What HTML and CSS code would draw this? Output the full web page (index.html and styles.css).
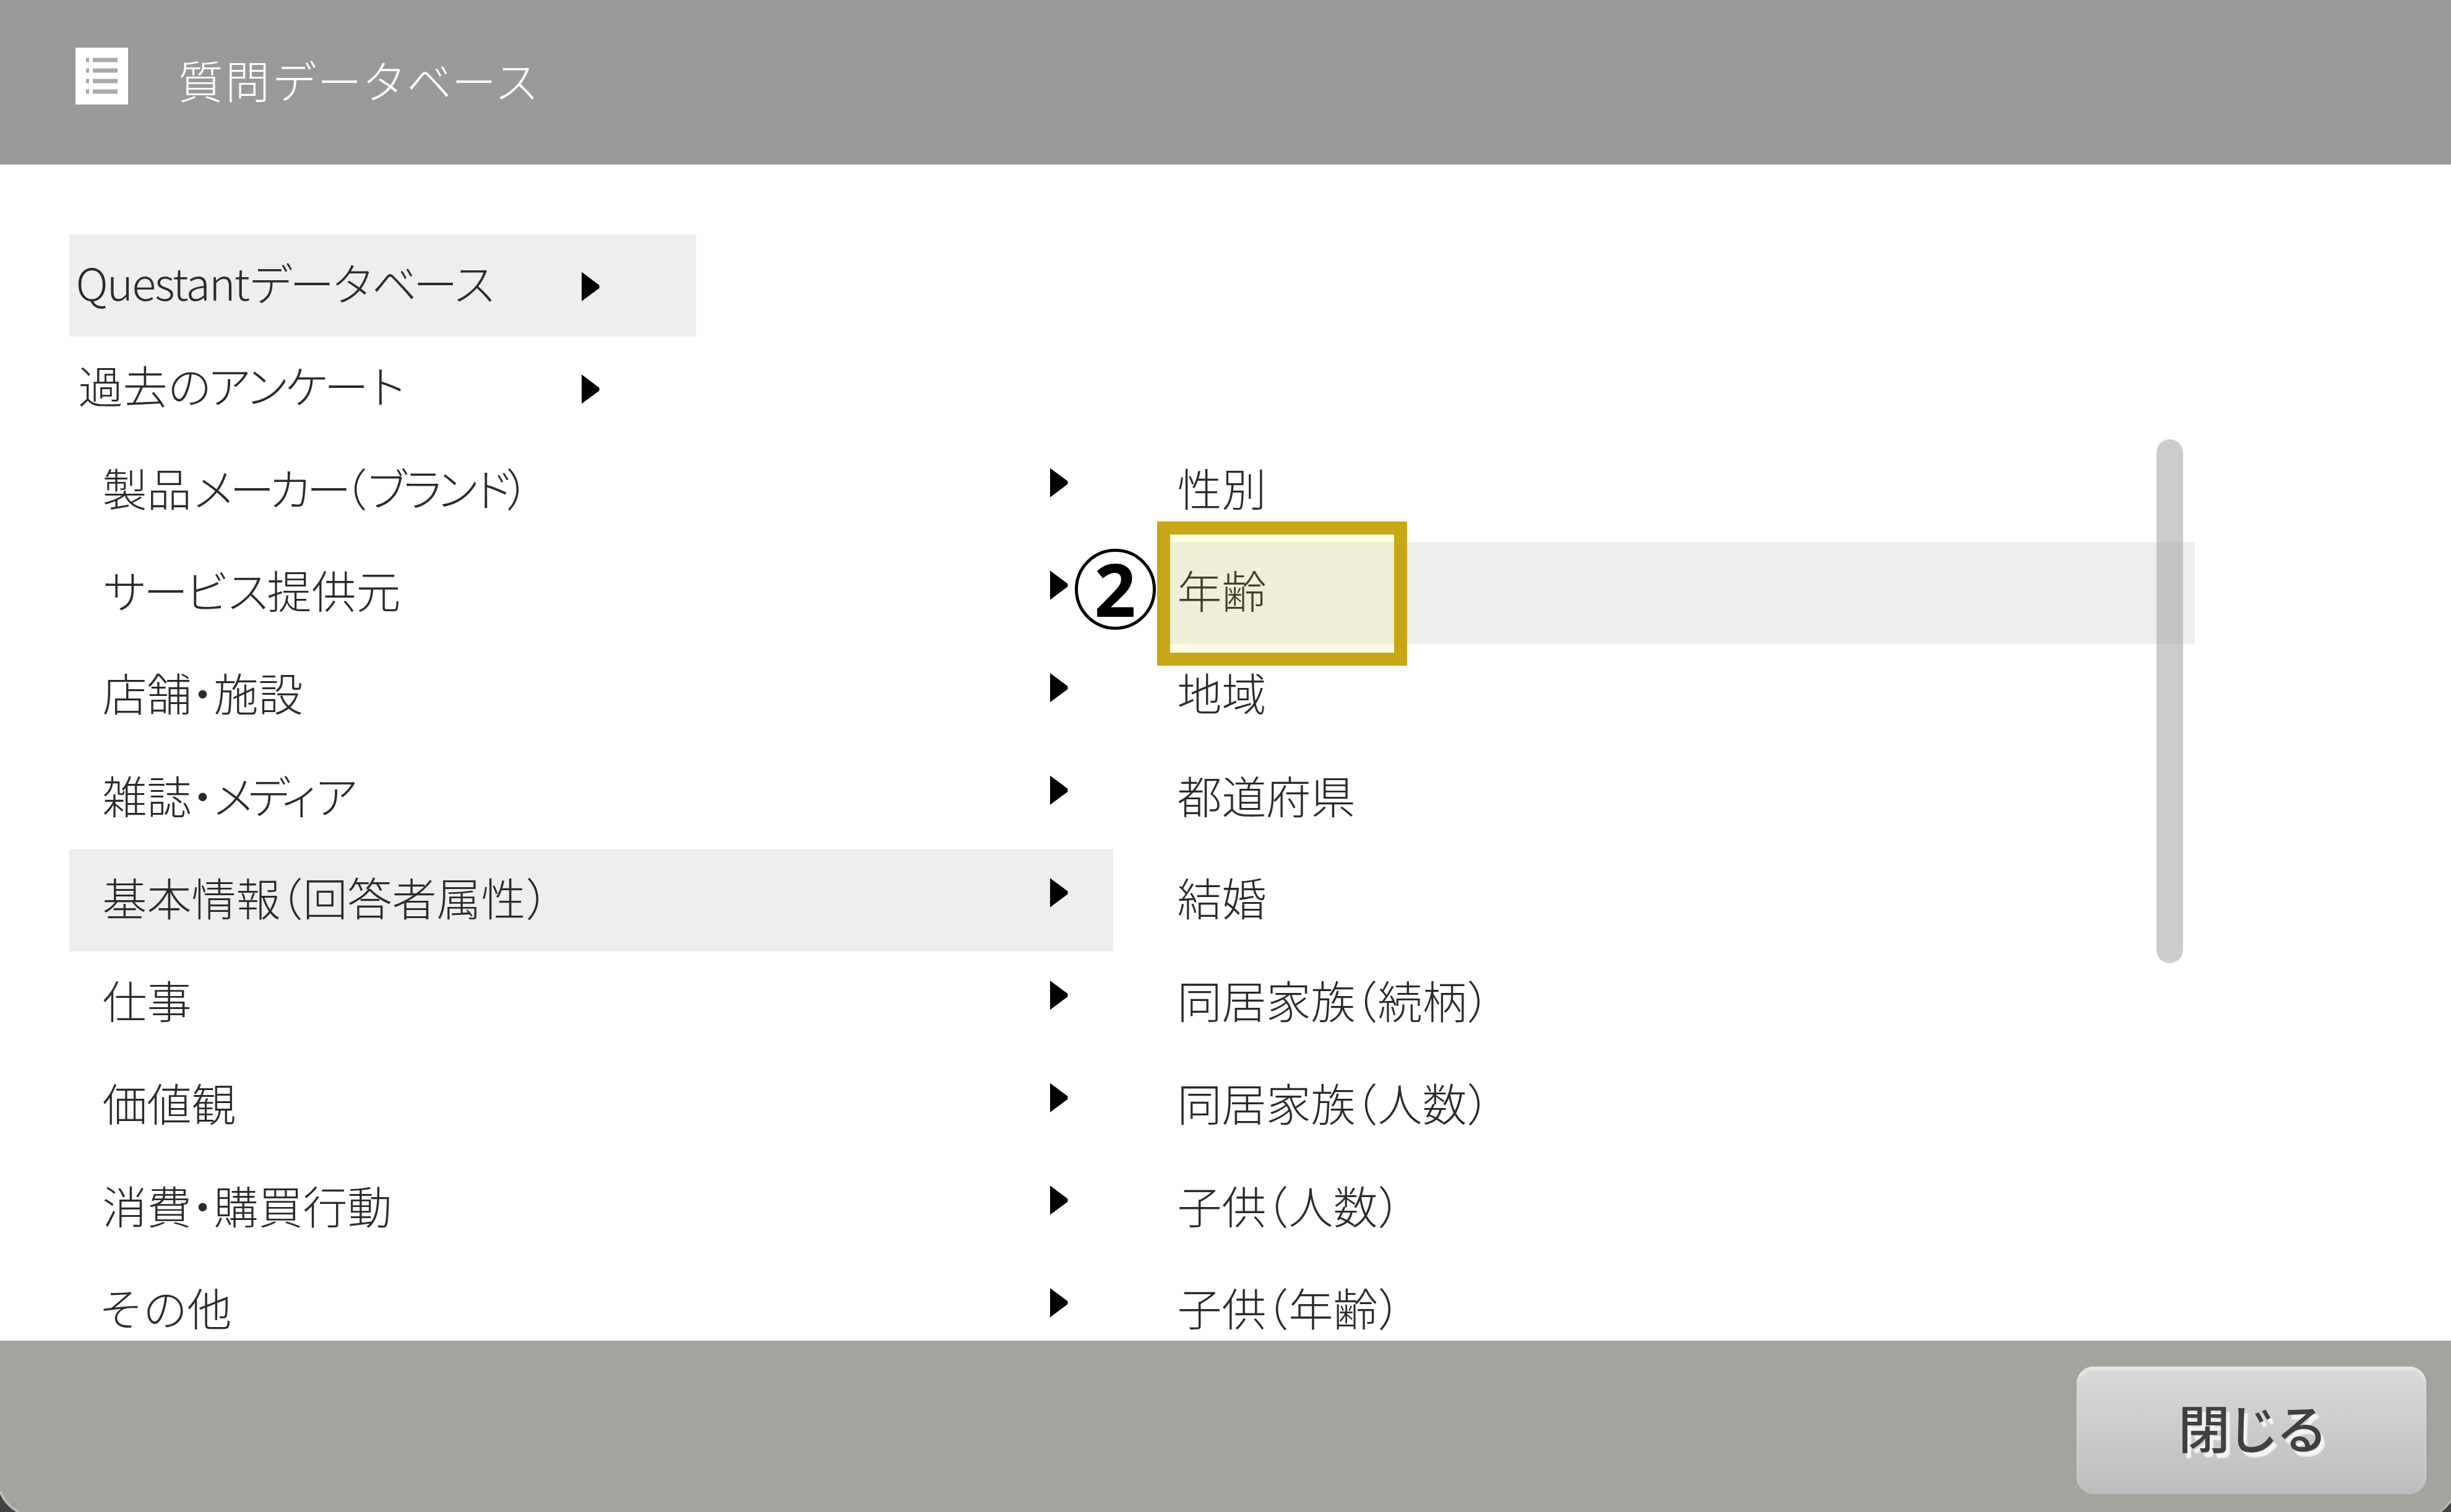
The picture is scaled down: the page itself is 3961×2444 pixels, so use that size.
FILE: index.html
```
<!DOCTYPE html>
<html lang="ja">
<head>
    <meta charset="UTF-8">
    <title>質問データベース</title>
    <link rel="stylesheet" href="styles.css">
</head>
<body>
    <div class="dialog">
        <header class="dialog-header">
            <svg class="header-icon" viewBox="0 0 85 92">
                <rect width="85" height="92" fill="#fff"/>
                <path d="M17 20h5M17 37h5M17 54h5M17 71h5M28 20h40M28 37h40M28 54h40M28 71h40" stroke="#a9a9a9" stroke-width="7"/>
            </svg>
            <h1 class="title">質問<span class="title-kana">データベース</span></h1>
        </header>
        <main class="dialog-body">
            <ul class="sources">
                <li class="row selected"><span class="label"><span class="latin">Questant</span><span class="kana loose">データベース</span></span><i class="arrow"></i></li>
                <li class="row"><span class="label past">過去<span class="kana">のアンケート</span></span><i class="arrow"></i></li>
            </ul>
            <div class="columns">
                <ul class="categories">
                    <li class="row"><span class="label">製品<span class="kana tight">メーカー</span>（<span class="kana narrow">ブランド</span>）</span><i class="arrow"></i></li>
                    <li class="row"><span class="label"><span class="kana loose">サービス</span>提供元</span><i class="arrow"></i></li>
                    <li class="row"><span class="label">店舗・施設</span><i class="arrow"></i></li>
                    <li class="row"><span class="label">雑誌・<span class="kana narrow">メディア</span></span><i class="arrow"></i></li>
                    <li class="row selected"><span class="label">基本情報（回答者属性）</span><i class="arrow"></i></li>
                    <li class="row"><span class="label">仕事</span><i class="arrow"></i></li>
                    <li class="row"><span class="label">価値観</span><i class="arrow"></i></li>
                    <li class="row"><span class="label">消費・購買行動</span><i class="arrow"></i></li>
                    <li class="row"><span class="label other">その他</span><i class="arrow"></i></li>
                </ul>
                <ul class="questions">
                    <li class="row"><span class="label">性別</span></li>
                    <li class="row selected"><span class="label">年齢</span>
                        <div class="step"><span class="step-number">2</span></div>
                        <div class="marker"></div>
                    </li>
                    <li class="row"><span class="label">地域</span></li>
                    <li class="row"><span class="label">都道府県</span></li>
                    <li class="row"><span class="label">結婚</span></li>
                    <li class="row"><span class="label">同居家族（続柄）</span></li>
                    <li class="row"><span class="label">同居家族（人数）</span></li>
                    <li class="row"><span class="label">子供（人数）</span></li>
                    <li class="row"><span class="label">子供（年齢）</span></li>
                </ul>
                <div class="scrollbar"></div>
            </div>
        </main>
        <footer class="dialog-footer">
            <button class="close">閉じる</button>
            <svg class="corner left" viewBox="0 0 32 34">
                <path d="M0 0Q8 22 30 34H0z" fill="#444"/>
                <path d="M0 0Q8 22 30 34" fill="none" stroke="#bbb" stroke-width="4"/>
            </svg>
            <svg class="corner right" viewBox="0 0 20 20">
                <path d="M20 2Q12 13 2 20H20z" fill="#444"/>
                <path d="M20 2Q12 13 2 20" fill="none" stroke="#bbb" stroke-width="3"/>
            </svg>
        </footer>
    </div>
</body>
</html>
```
FILE: styles.css
```
* {
    box-sizing: border-box;
}
body {
    margin: 0;
    font-family: "Noto Sans CJK JP", sans-serif;
    font-size: 72px;
    font-weight: 300;
    color: #2b2b2b;
    background: #fff;
}
ul {
    list-style: none;
    margin: 0;
    padding: 0;
}
.dialog {
    display: flex;
    flex-direction: column;
    width: 3961px;
    height: 2444px;
    overflow: hidden;
}
.dialog-header {
    display: flex;
    align-items: center;
    flex: none;
    height: 266px;
    padding-left: 122px;
    background: #999;
}
.header-icon {
    width: 85px;
    height: 92px;
    margin-bottom: 20px;
}
.title {
    margin: 0 0 10px 81px;
    font-size: 72px;
    font-weight: 300;
    line-height: 100px;
    letter-spacing: 4px;
    color: #fff;
}
.title-kana {
    letter-spacing: 0.5px;
}
.dialog-body {
    flex: 1;
    min-height: 0;
    padding: 112.5px 0 0 111.5px;
    overflow: hidden;
}
.row {
    display: flex;
    align-items: center;
    position: relative;
    height: 165.7px;
    line-height: 100px;
    white-space: nowrap;
}
.selected {
    background: #eee;
}
.label {
    flex: 1;
    padding-bottom: 12px;
    font-feature-settings: "halt";
}
.kana {
    letter-spacing: -8px;
}
.tight {
    letter-spacing: -10px;
}
.narrow {
    margin-left: -4px;
    letter-spacing: -15px;
}
.loose {
    letter-spacing: -5.5px;
}
.latin {
    letter-spacing: -2px;
}
.arrow {
    width: 29px;
    height: 48px;
    background: #000;
    clip-path: polygon(0 0, 100% 45%, 100% 55%, 0 100%);
}
/* top level list */
.sources {
    width: 1013px;
}
.sources .row {
    padding: 0 156px 0 11px;
}
.sources .past {
    padding-left: 4px;
}
.sources .arrow {
    margin-top: 4px;
}
/* second and third level */
.columns {
    display: flex;
    gap: 82px;
    position: relative;
}
.categories {
    width: 1687px;
}
.categories .row {
    padding: 0 73px 0 54px;
}
.categories .arrow {
    margin-bottom: 25px;
}
.categories .other {
    margin-left: -6px;
    letter-spacing: -0.5px;
}
.questions {
    width: 1666px;
}
.questions .row {
    padding-left: 22px;
}
.scrollbar {
    position: absolute;
    top: 0;
    left: 3373.5px;
    width: 43px;
    height: 847px;
    border-radius: 22px;
    background: rgba(153, 153, 153, 0.5);
}
/* highlighted step */
.marker {
    position: absolute;
    top: -33px;
    left: -11px;
    width: 404px;
    height: 233px;
    border: 21px solid #c8a615;
    background: rgba(255, 255, 0, 0.1);
}
.step {
    display: flex;
    align-items: center;
    justify-content: center;
    position: absolute;
    top: 11px;
    left: -144px;
    width: 131px;
    height: 131px;
    border: 5.5px solid #000;
    border-radius: 50%;
    background: #fff;
}
.step-number {
    font-family: "Open Sans", sans-serif;
    font-size: 118px;
    font-weight: 700;
    color: #000;
}
.dialog-footer {
    display: flex;
    justify-content: flex-end;
    position: relative;
    flex: none;
    height: 277.5px;
    padding: 42px 40px 0 0;
    background: #a4a39e;
}
.close {
    width: 565px;
    height: 206px;
    padding: 0 0 12px;
    border: none;
    border-radius: 27px;
    background: linear-gradient(#dadada, #bdbdbd);
    box-shadow: inset 0 6px 4px #e6e6e6;
    font-family: "Noto Sans CJK JP", sans-serif;
    font-size: 84px;
    font-weight: 500;
    letter-spacing: -5px;
    color: #404040;
    text-shadow: 6px 8px 2px #f4f4f4;
}
.corner {
    position: absolute;
    bottom: 0;
}
.left {
    left: 0;
    width: 32px;
    height: 34px;
}
.right {
    right: 0;
    width: 20px;
    height: 20px;
}
```
